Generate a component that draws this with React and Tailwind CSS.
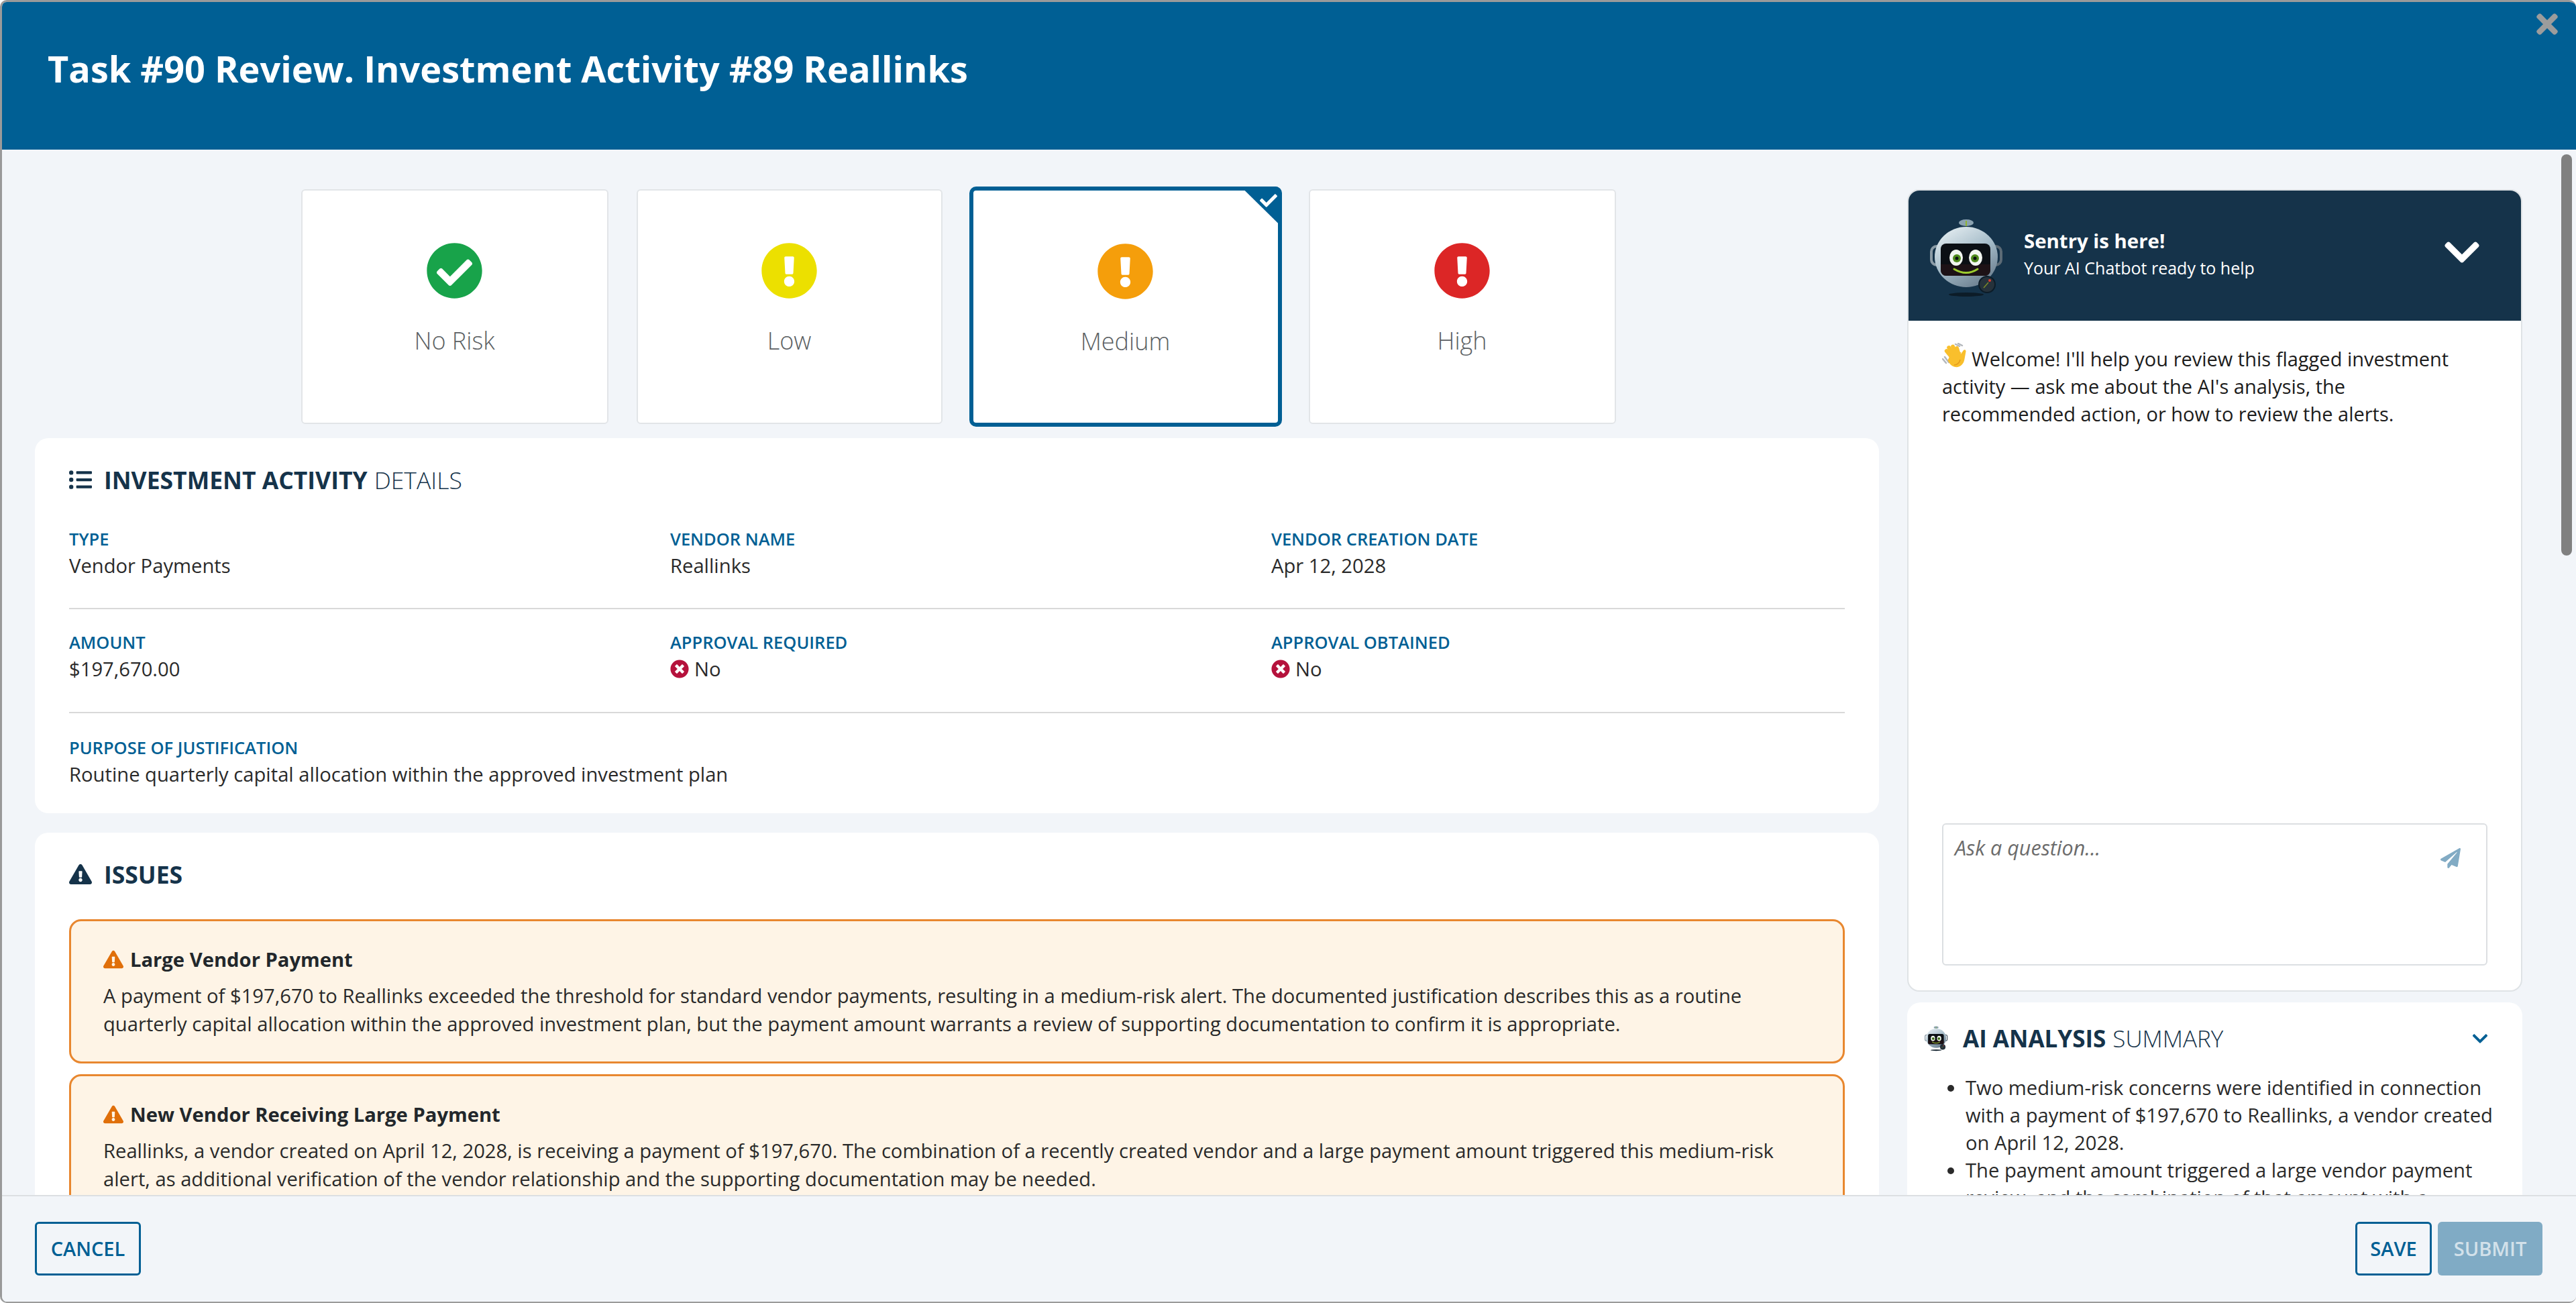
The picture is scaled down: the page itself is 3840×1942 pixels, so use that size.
import React from "react";
import { FaCheckCircle, FaExclamationCircle, FaListUl, FaExclamationTriangle, FaTimes, FaTimesCircle, FaCheck, FaPaperPlane, FaChevronDown } from "react-icons/fa";

const font = { fontFamily: '"Open Sans", "Noto Sans", sans-serif' };

const RobotIcon = ({ className, id }) => (
  <svg viewBox="0 0 110 118" className={className}>
    <defs>
      <linearGradient id={id} x1="0.2" y1="0" x2="0.8" y2="1">
        <stop offset="0" stopColor="#e4edf1" />
        <stop offset="0.5" stopColor="#a3bac7" />
        <stop offset="1" stopColor="#66798a" />
      </linearGradient>
    </defs>
    <ellipse cx="54" cy="113" rx="26" ry="3" fill="#0c1c28" />
    <ellipse cx="54" cy="6" rx="11" ry="5" fill="#8ba2b0" />
    <path d="M54 3v8" stroke="#8fb52f" strokeWidth="2" />
    <rect x="2" y="41" width="16" height="28" rx="8" fill="none" stroke="#8a9ba6" strokeWidth="4" />
    <rect x="90" y="41" width="16" height="28" rx="8" fill="none" stroke="#5c6b76" strokeWidth="4" />
    <ellipse cx="54" cy="57" rx="47" ry="45" fill={`url(#${id})`} />
    <rect x="16" y="37" width="74" height="48" rx="8" fill="#0b0f14" />
    <path d="M16 68h74v9a8 8 0 0 1-8 8H24a8 8 0 0 1-8-8z" fill="#2a1418" opacity="0.6" />
    <ellipse cx="39" cy="58" rx="10" ry="12" fill="#f2f6f0" />
    <ellipse cx="68" cy="58" rx="10" ry="12" fill="#f2f6f0" />
    <circle cx="40" cy="59" r="6" fill="#4f8a1c" />
    <circle cx="67" cy="59" r="6" fill="#4f8a1c" />
    <circle cx="40" cy="59" r="2.5" fill="#0b0f14" />
    <circle cx="67" cy="59" r="2.5" fill="#0b0f14" />
    <path d="M36 75q18 11 35 0" fill="none" stroke="#9ccb2e" strokeWidth="3" strokeLinecap="round" />
    <circle cx="85" cy="98" r="12" fill="#26323b" stroke="#0c1c28" strokeWidth="2" />
    <path d="M80 103l7-8" stroke="#7a8b2a" strokeWidth="1.5" />
    <circle cx="89" cy="92" r="2" fill="#e23b2e" />
  </svg>
);

// waving hand, drawn since no emoji font is installed
const WaveIcon = ({ className }) => (
  <svg viewBox="0 0 38 38" className={className}>
    <path d="M20 2l6 3M24 1l6 3" stroke="#b4b8bc" strokeWidth="2.5" strokeLinecap="round" fill="none" />
    <path d="M1 24l5 6M4 21l6 8" stroke="#b4b8bc" strokeWidth="2.5" strokeLinecap="round" fill="none" />
    <g fill="#f9bf2c">
      <rect x="7" y="8" width="6" height="17" rx="3" transform="rotate(-40 10 16)" />
      <rect x="11" y="3" width="6" height="20" rx="3" transform="rotate(-32 14 13)" />
      <rect x="16" y="2" width="6" height="20" rx="3" transform="rotate(-24 19 12)" />
      <rect x="21" y="5" width="5.5" height="17" rx="2.7" transform="rotate(-16 23 13)" />
      <path d="M27 18l5-7c2-2 4 0 3.5 2l-2 11c-1 8-7 13-14 12-5-1-9-5-11-10l6-13 14 1z" />
    </g>
    <path d="M27 25c-1 5-5 8-9 8" stroke="#e59b1c" strokeWidth="1.5" fill="none" />
  </svg>
);

const RiskCard = ({ icon, color, label, selected, className = "w-[458px]" }) => (
  <div className={selected
    ? "relative flex h-[358px] w-[466px] flex-col items-center rounded-[10px] border-[6px] border-[#005f94] bg-white pt-[78px]"
    : `flex h-[350px] flex-col items-center rounded-[6px] border-2 border-[#e2e5e8] bg-white pt-[77px] ${className}`}>
    {selected && (
      <div className="absolute -right-[6px] -top-[6px] h-[60px] w-[61px] rounded-tr-[10px] bg-[#005f94] [clip-path:polygon(0_0,100%_0,100%_100%)]">
        <FaCheck className="absolute right-[7px] top-[8px] text-[26px] text-white" />
      </div>
    )}
    <span className={color}>{icon}</span>
    <span className="mt-[37px] text-[36px] font-light leading-[50px] text-[#5b5f63]">{label}</span>
  </div>
);

const Field = ({ label, children }) => (
  <div>
    <div className="text-[25.5px] font-semibold uppercase leading-[34px] text-[#005f94]">{label}</div>
    <div className="mt-[3px] flex items-center text-[29.2px] leading-[40px] text-[#2a2a2a]">{children}</div>
  </div>
);

const NoValue = () => (
  <>
    <FaTimesCircle className="mr-[8px] text-[28px] text-[#b5123c]" />
    No
  </>
);

const IssueCard = ({ title, lines }) => (
  <div className="rounded-[18px] border-[3px] border-[#e8872f] bg-[#fef4e6] px-[48px] pb-[35px] pt-[35px]">
    <div className="flex items-center text-[29.2px] font-bold leading-[44px] text-[#22272b]">
      <FaExclamationTriangle className="mr-[10px] text-[30px] text-[#e06f0a]" />
      {title}
    </div>
    <p className="mt-[11px] text-[29.2px] leading-[42px] text-[#2a2a2a]">{lines}</p>
  </div>
);

export default function App() {
  return (
    <div style={font} className="relative flex h-[1942px] w-[3840px] flex-col overflow-hidden rounded-[10px] border-b-2 border-l-[3px] border-t-[3px] border-[#9a9a9a] bg-[#f2f5f9]">
      <header className="relative flex h-[220px] shrink-0 items-center bg-[#005f94] pl-[68px]">
        <h1 className="pb-[22px] text-[54px] font-bold leading-[72px] text-white">Task #90 Review. Investment Activity #89 Reallinks</h1>
        <FaTimes className="absolute right-[20px] top-[10px] text-[46px] text-[#9c9c9c]" />
      </header>

      <main className="relative flex min-h-0 flex-1 gap-[42px] overflow-hidden pl-[49px]">
        <div className="flex w-[2749px] shrink-0 flex-col">
          <div className="flex h-[430px] shrink-0 items-center justify-center gap-[40px] pl-[4px] pt-[38px]">
            <RiskCard label="No Risk" color="text-[#18a34a]" icon={<FaCheckCircle className="text-[85px]" />} />
            <RiskCard label="Low" className="ml-[2px] w-[456px]" color="text-[#ece000]" icon={<FaExclamationCircle className="text-[85px]" />} />
            <RiskCard selected label="Medium" color="text-[#f59e0b]" icon={<FaExclamationCircle className="text-[85px]" />} />
            <RiskCard label="High" color="text-[#dc2626]" icon={<FaExclamationCircle className="text-[85px]" />} />
          </div>

          <section className="shrink-0 rounded-[20px] bg-white px-[51px] pb-[38px] pt-[38px]">
            <h2 className="flex items-center text-[35.5px] leading-[48px] text-[#15334a]">
              <FaListUl className="mr-[18px] text-[34px]" />
              <span className="font-bold">INVESTMENT ACTIVITY</span>
              <span className="ml-[10px] font-light">DETAILS</span>
            </h2>
            <div className="mt-[47px] grid grid-cols-[896px_896px_1fr] border-b-2 border-[#d9d9d9] pb-[43px]">
              <Field label="Type">Vendor Payments</Field>
              <Field label="Vendor Name">Reallinks</Field>
              <Field label="Vendor Creation Date">Apr 12, 2028</Field>
            </div>
            <div className="grid grid-cols-[896px_896px_1fr] border-b-2 border-[#d9d9d9] pb-[44px] pt-[32px]">
              <Field label="Amount">$197,670.00</Field>
              <Field label="Approval Required"><NoValue /></Field>
              <Field label="Approval Obtained"><NoValue /></Field>
            </div>
            <div className="pt-[34px]">
              <Field label="Purpose of Justification">Routine quarterly capital allocation within the approved investment plan</Field>
            </div>
          </section>

          <section className="mt-[29px] rounded-[20px] bg-white px-[51px] pt-[38px]">
            <h2 className="flex items-center text-[35.5px] font-bold leading-[48px] text-[#15334a]">
              <FaExclamationTriangle className="mr-[18px] text-[34px]" />
              ISSUES
            </h2>
            <div className="mt-[43px] flex flex-col gap-[16px]">
              <IssueCard
                title="Large Vendor Payment"
                lines="A payment of $197,670 to Reallinks exceeded the threshold for standard vendor payments, resulting in a medium-risk alert. The documented justification describes this as a routine quarterly capital allocation within the approved investment plan, but the payment amount warrants a review of supporting documentation to confirm it is appropriate."
              />
              <IssueCard
                title="New Vendor Receiving Large Payment"
                lines="Reallinks, a vendor created on April 12, 2028, is receiving a payment of $197,670. The combination of a recently created vendor and a large payment amount triggered this medium-risk alert, as additional verification of the vendor relationship and the supporting documentation may be needed."
              />
            </div>
          </section>
        </div>

        <aside className="flex w-[917px] shrink-0 flex-col pt-[59px]">
          <div className="flex h-[1196px] shrink-0 flex-col rounded-[18px] border-2 border-[#dfe3e6] bg-white">
            <div className="flex h-[194px] shrink-0 items-center rounded-t-[16px] bg-[#15334a] pl-[32px] pr-[58px]">
              <RobotIcon id="robotChat" className="mt-[8px] h-[118px] w-[110px]" />
              <div className="ml-[30px] flex-1 pb-[6px]">
                <div className="text-[29.4px] font-bold leading-[42px] text-white">Sentry is here!</div>
                <div className="text-[25px] leading-[38px] text-white">Your AI Chatbot ready to help</div>
              </div>
              <FaChevronDown className="mb-[10px] text-[60px] text-white" />
            </div>
            <div className="flex-1 pl-[50px] pr-[84px] pt-[33px]">
              <p className="text-[29px] leading-[41px] text-[#1c1c1c]">
                <WaveIcon className="mr-[6px] inline-block h-[38px] w-[38px] align-[-3px]" />
                Welcome! I'll help you review this flagged investment activity — ask me about the AI's analysis, the recommended action, or how to review the alerts.
              </p>
            </div>
            <div className="mx-[50px] mb-[37px] flex h-[212px] items-start justify-between rounded-[6px] border-2 border-[#dcdfe2] pl-[17px] pr-[18px] pt-[14px]">
              <span className="text-[30.5px] italic leading-[40px] text-[#6c6c6c]">Ask a question...</span>
              <FaPaperPlane className="mr-[20px] mt-[21px] text-[30px] text-[#82abc4]" />
            </div>
          </div>
          <section className="mt-[16px] rounded-[20px] bg-white pl-[26px] pr-[40px] pt-[30px]">
            <div className="flex items-center justify-between">
              <h2 className="flex items-center text-[35px] leading-[48px] text-[#15334a]">
                <RobotIcon id="robotSummary" className="mr-[22px] h-[38px] w-[35px]" />
                <span className="font-bold">AI ANALYSIS</span>
                <span className="ml-[10px] font-light">SUMMARY</span>
              </h2>
              <FaChevronDown className="mr-[10px] text-[26px] text-[#005f94]" />
            </div>
            <ul className="ml-[61px] mt-[29px] list-disc text-[29.2px] leading-[41px] text-[#2a2a2a]">
              <li>Two medium-risk concerns were identified in connection with a payment of $197,670 to Reallinks, a vendor created on April 12, 2028.</li>
              <li>The payment amount triggered a large vendor payment review, and the combination of that amount with a recently created vendor raised the level of concern.</li>
            </ul>
          </section>
        </aside>

        {/* page scrollbar thumb */}
        <div className="absolute right-[6px] top-[7px] h-[598px] w-[16px] rounded-full bg-[#808080]" />
      </main>

      <footer className="flex h-[159px] shrink-0 items-start justify-between border-t-2 border-[#dcdfe2] bg-[#f2f5f9] pl-[49px] pr-[50px] pt-[38px]">
        <button className="flex h-[80px] w-[158px] items-center justify-center rounded-[6px] border-[3px] border-[#005f94] text-[29px] font-semibold text-[#005f94]">CANCEL</button>
        <div className="flex gap-[9px]">
          <button className="flex h-[80px] w-[114px] items-center justify-center rounded-[6px] border-[3px] border-[#005f94] text-[29px] font-semibold text-[#005f94]">SAVE</button>
          <button className="flex h-[80px] w-[156px] items-center justify-center rounded-[6px] bg-[#80abc5] text-[29px] font-semibold text-[#d3e1ea]">SUBMIT</button>
        </div>
      </footer>
    </div>
  );
}
